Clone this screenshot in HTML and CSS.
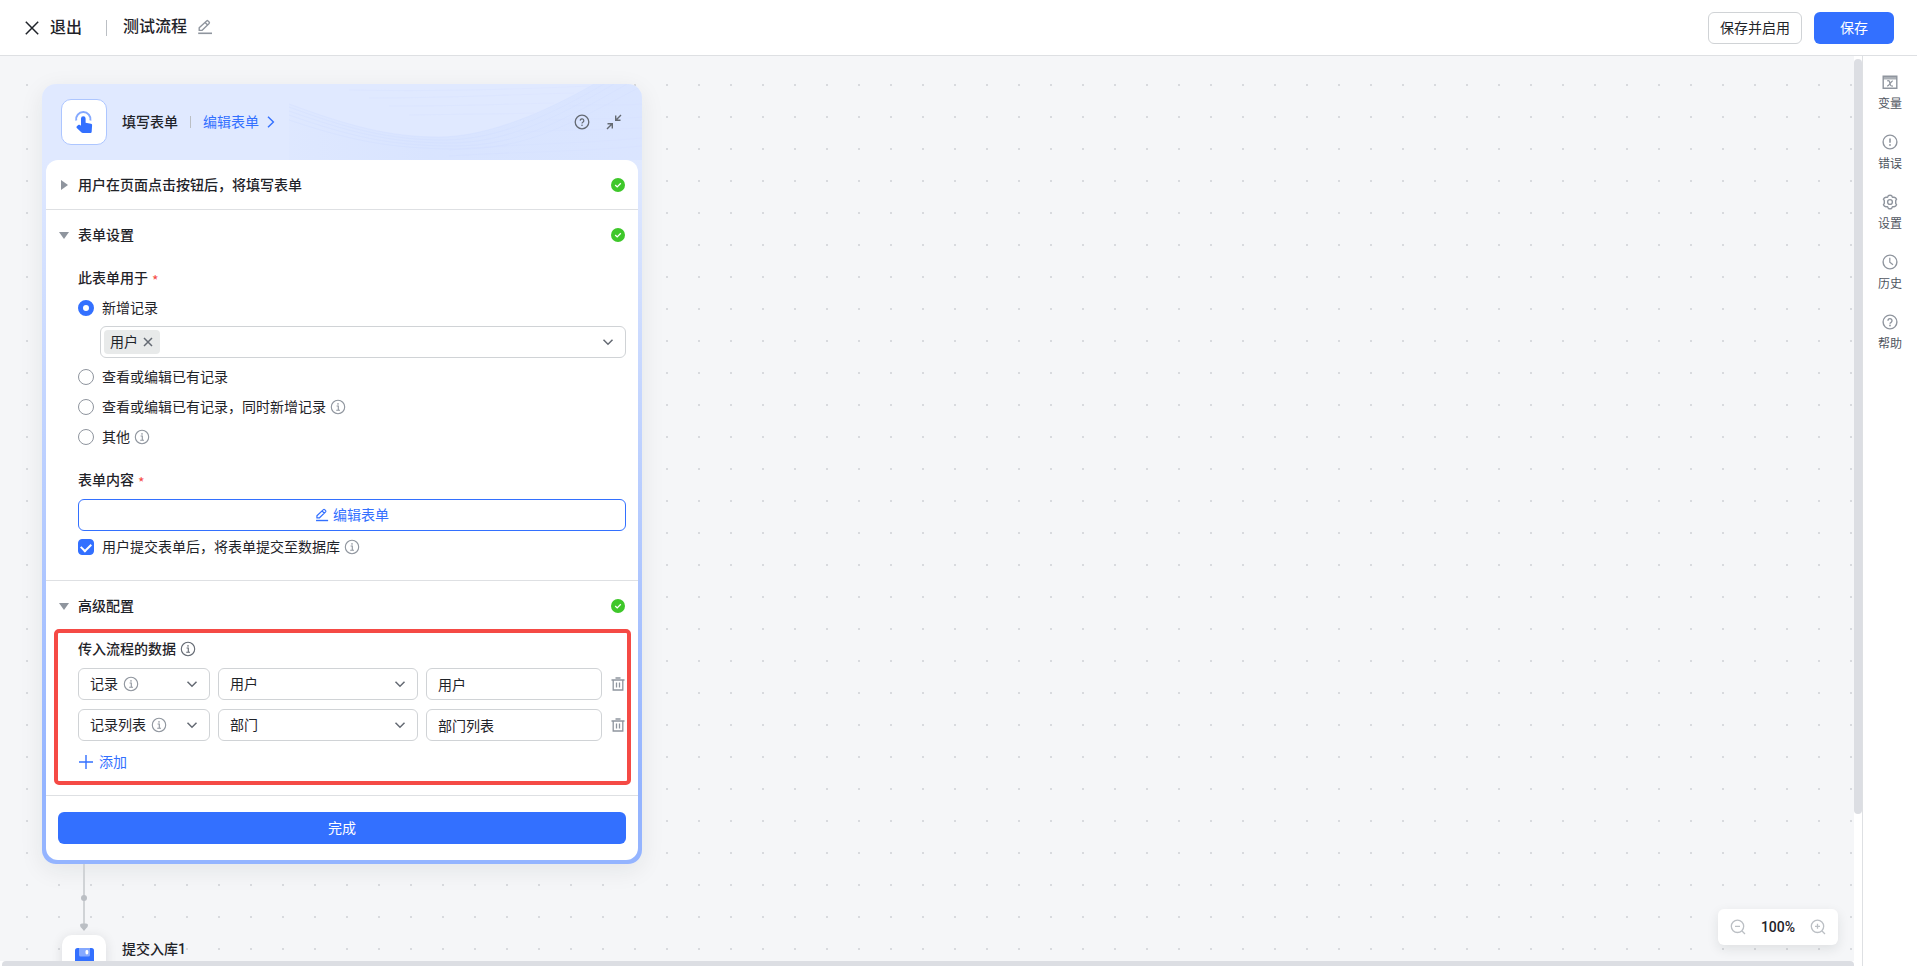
FILE: index.html
```html
<!DOCTYPE html>
<html lang="zh-CN">
<head>
<meta charset="utf-8">
<title>测试流程</title>
<link rel="stylesheet" href="styles.css">
</head>
<body>
<svg class="defs" aria-hidden="true">
  <symbol id="i-info" viewBox="0 0 16 16"><circle cx="8" cy="8" r="6.7" fill="none" stroke="currentColor" stroke-width="1.1"/><path d="M6.6 7h1.7v4M6.2 11.3h3.8" fill="none" stroke="currentColor" stroke-width="1.1"/><rect x="7.3" y="4.2" width="1.4" height="1.4" fill="currentColor"/></symbol>
  <symbol id="i-help" viewBox="0 0 16 16"><circle cx="8" cy="8" r="6.9" fill="none" stroke="currentColor" stroke-width="1.4"/><path d="M6 6.7a2 2 0 1 1 3.1 1.6c-.8.5-1.1.8-1.1 1.5" fill="none" stroke="currentColor" stroke-width="1.4"/><circle cx="8" cy="11.5" r=".9" fill="currentColor"/></symbol>
  <symbol id="i-pen" viewBox="0 0 16 16"><path d="M2.2 11.4v-2.6L9.6 1.9a1 1 0 0 1 1.4 0l1.1 1.1a1 1 0 0 1 0 1.4L4.9 11.4zM8.1 3.4l2.5 2.5" fill="none" stroke="currentColor" stroke-width="1.4" stroke-linejoin="round"/><path d="M1.2 14.3h13.8" stroke="currentColor" stroke-width="1.6"/></symbol>
  <symbol id="i-down" viewBox="0 0 12 12"><path d="M1.5 3.8 6 8.2l4.500-4.400" fill="none" stroke="currentColor" stroke-width="1.5"/></symbol>
  <symbol id="i-check" viewBox="0 0 14 14"><circle cx="7" cy="7" r="7" fill="#3ec72a"/><path d="m4.200 7 2 1.900 3.600-3.600" fill="none" stroke="#fff" stroke-width="1.300"/></symbol>
  <symbol id="i-trash" viewBox="0 0 14 14"><path d="M.5 3h13M4.500 1h5M2.200 3v10h9.600V3M5.500 5.500v5M8.500 5.500v5" fill="none" stroke="currentColor" stroke-width="1.300"/></symbol>
</svg>

<header class="topbar">
  <button class="exit" type="button"><svg viewBox="0 0 14 14" class="ic14"><path d="m.8.8 12.400 12.400M13.200.8.8 13.200" stroke="currentColor" stroke-width="1.500"/></svg>退出</button>
  <span class="topbar-divider"></span>
  <h1 class="flow-name">测试流程</h1>
  <button class="icon-btn" type="button" aria-label="编辑名称"><svg class="ic16"><use href="#i-pen"/></svg></button>
  <div class="topbar-actions">
    <button class="btn btn-plain" type="button">保存并启用</button>
    <button class="btn btn-primary btn-save" type="button">保存</button>
  </div>
</header>

<div class="workspace">
  <main class="canvas">
    <section class="node">
      <div class="node-head">
        <svg class="waves" viewBox="0 0 353 76" preserveAspectRatio="none" fill="none" aria-hidden="true">
          <defs><linearGradient id="wave-fill" x1="0" x2="1"><stop offset="0" stop-color="#d3e0ff" stop-opacity=".15"/><stop offset=".4" stop-color="#d3e0ff" stop-opacity=".55"/><stop offset="1" stop-color="#d3e0ff" stop-opacity=".45"/></linearGradient></defs>
          <path d="M0 20C60 42 100 53 150 53S260 26 305 0H353V76H0Z" fill="url(#wave-fill)"/>
          <g stroke="#cddbff" stroke-width=".5" opacity=".5">
            <path d="M0 20C60 42 100 53 150 53S260 26 305 0M0 23C60 45 100 56 155 56S265 29 315 0M0 27C60 48 100 59 160 59S270 32 325 0M0 31C60 52 100 62 165 62S275 36 338 0M0 36C60 56 100 65 170 65S280 40 353 2"/>
            <path d="M60 6C160 8 260 4 300 2M80 14C160 14 240 10 285 9M100 22C180 22 220 20 265 19M120 31C180 30 220 30 245 29M160 66C220 60 290 60 353 54M160 72C220 68 290 68 353 62M230 48C270 46 310 46 353 44M260 36C290 34 320 36 353 33M280 22C310 20 330 22 353 20" opacity=".7"/>
          </g>
        </svg>
        <span class="node-icon"><svg viewBox="0 0 24 24" class="ic24"><path d="M4.200 10.500a7.200 7.200 0 1 1 14.200 0" fill="none" stroke="#85a9ff" stroke-width="2"/><path d="M9 8.500a2.300 2.300 0 0 1 4.600 0v4.300l5.400.9c.8.200 1.200.8 1.100 1.500l-.4 6.200c0 .9-.7 1.600-1.600 1.600H11c-.8 0-1.500-.3-2-.9l-4.200-4.200c-.6-.6-.3-1.500.3-1.900l1.200-.9c.7-.5 1.700-.4 2.700.6z" fill="#3370ff"/></svg></span>
        <h2 class="node-title">填写表单</h2>
        <span class="head-divider"></span>
        <a class="head-link" href="#form">编辑表单<svg viewBox="0 0 8 12" class="chev"><path d="m1 .8 5.400 5.200L1 11.200" fill="none" stroke="currentColor" stroke-width="1.400"/></svg></a>
        <div class="head-tools">
          <button class="icon-btn dark" type="button" aria-label="帮助"><svg viewBox="0 0 16 16" class="ic16"><circle cx="8" cy="8" r="6.800" fill="none" stroke="currentColor" stroke-width="1.300"/><path d="M6.200 6.600a1.800 1.800 0 1 1 2.900 1.500c-.8.500-1.100.8-1.100 1.500" fill="none" stroke="currentColor" stroke-width="1.200"/><circle cx="8" cy="11.300" r=".8" fill="currentColor"/></svg></button>
          <button class="icon-btn dark" type="button" aria-label="收起"><svg viewBox="0 0 16 16" class="ic16"><path d="M15 1 10.300 5.700M9.700 1.500v4.800h4.800M1 15l4.700-4.700M1.500 9.700h4.800v4.800" fill="none" stroke="currentColor" stroke-width="1.400"/></svg></button>
        </div>
      </div>

      <div class="node-body">
        <section class="section">
          <div class="section-head"><button class="caret caret-right" type="button" aria-label="展开"></button><h3>用户在页面点击按钮后，将填写表单</h3><svg class="ic14"><use href="#i-check"/></svg></div>
        </section>

        <section class="section">
          <div class="section-head"><button class="caret caret-down" type="button" aria-label="收起"></button><h3>表单设置</h3><svg class="ic14"><use href="#i-check"/></svg></div>
          <div class="section-body">
            <fieldset class="field">
              <legend class="label">此表单用于<span class="req">*</span></legend>
              <label class="choice"><input type="radio" name="use" checked>新增记录</label>
              <div class="tag-select">
                <span class="tag">用户<button type="button" aria-label="移除用户"><svg viewBox="0 0 10 10" class="ic10"><path d="m1 1 8 8M9 1 1 9" stroke="currentColor" stroke-width="1.500"/></svg></button></span>
                <button class="icon-btn dark" type="button" aria-label="选择数据表"><svg class="ic12"><use href="#i-down"/></svg></button>
              </div>
              <label class="choice"><input type="radio" name="use">查看或编辑已有记录</label>
              <label class="choice"><input type="radio" name="use">查看或编辑已有记录，同时新增记录<svg class="ic16 info"><use href="#i-info"/></svg></label>
              <label class="choice"><input type="radio" name="use">其他<svg class="ic16 info"><use href="#i-info"/></svg></label>
            </fieldset>
            <div class="field" id="form">
              <div class="label">表单内容<span class="req">*</span></div>
              <button class="btn btn-outline" type="button"><svg class="ic14"><use href="#i-pen"/></svg>编辑表单</button>
              <label class="choice submit"><input type="checkbox" checked>用户提交表单后，将表单提交至数据库<svg class="ic16 info"><use href="#i-info"/></svg></label>
            </div>
          </div>
        </section>

        <section class="section">
          <div class="section-head"><button class="caret caret-down" type="button" aria-label="收起"></button><h3>高级配置</h3><svg class="ic14"><use href="#i-check"/></svg></div>
          <div class="section-body">
            <div class="label">传入流程的数据<svg class="ic16 info info-dark"><use href="#i-info"/></svg></div>
            <div class="data-rows">
              <div class="data-row">
                <div class="select"><select aria-label="类型"><option>记录</option></select><svg class="ic16 info info-short"><use href="#i-info"/></svg><svg class="ic12 arrow"><use href="#i-down"/></svg></div>
                <div class="select"><select aria-label="数据表"><option>用户</option></select><svg class="ic12 arrow"><use href="#i-down"/></svg></div>
                <input class="text" type="text" aria-label="名称" value="用户">
                <button class="icon-btn" type="button" aria-label="删除"><svg class="ic14"><use href="#i-trash"/></svg></button>
              </div>
              <div class="data-row">
                <div class="select"><select aria-label="类型"><option>记录列表</option></select><svg class="ic16 info info-long"><use href="#i-info"/></svg><svg class="ic12 arrow"><use href="#i-down"/></svg></div>
                <div class="select"><select aria-label="数据表"><option>部门</option></select><svg class="ic12 arrow"><use href="#i-down"/></svg></div>
                <input class="text" type="text" aria-label="名称" value="部门列表">
                <button class="icon-btn" type="button" aria-label="删除"><svg class="ic14"><use href="#i-trash"/></svg></button>
              </div>
            </div>
            <button class="add" type="button"><svg viewBox="0 0 14 14" class="ic14"><path d="M7 0v14M0 7h14" stroke="currentColor" stroke-width="1.400"/></svg>添加</button>
          </div>
          <div class="highlight"></div>
        </section>

        <footer class="node-foot"><button class="btn btn-primary" type="button">完成</button></footer>
      </div>
    </section>

    <svg class="connector" viewBox="0 0 10 68" aria-hidden="true"><path d="M5 0v62" stroke="#d0d3d6" stroke-width="2"/><circle cx="5" cy="34" r="3" fill="#bbbfc4"/><path d="M1 61q0-1.500 2-1.500h4q2 0 2 1.500 0 2-2 3.500l-2 2.500-2-2.500Q1 63 1 61z" fill="#bbbfc4"/></svg>

    <section class="next-node">
      <span class="next-icon"><svg viewBox="0 0 20 20" class="ic20"><rect x="1" y="1" width="19" height="19" rx="2.500" fill="#3370ff"/><path d="M5 1h11v7a1.500 1.500 0 0 1-1.500 1.500h-8A1.500 1.500 0 0 1 5 8z" fill="#85a9ff"/><rect x="11.500" y="3" width="2.800" height="4.500" rx="1.400" fill="#fff"/></svg></span>
      <h2 class="node-title">提交入库1</h2>
    </section>

    <div class="zoom">
      <button class="icon-btn" type="button" aria-label="缩小"><svg viewBox="0 0 16 16" class="ic16"><circle cx="7.500" cy="7.300" r="6.200" fill="none" stroke="currentColor" stroke-width="1.300"/><path d="m12 12 3 3M5 7.300h5" stroke="currentColor" stroke-width="1.300"/></svg></button>
      <span>100%</span>
      <button class="icon-btn" type="button" aria-label="放大"><svg viewBox="0 0 16 16" class="ic16"><circle cx="7.500" cy="7.300" r="6.200" fill="none" stroke="currentColor" stroke-width="1.300"/><path d="m12 12 3 3M5 7.300h5M7.500 4.800v5" stroke="currentColor" stroke-width="1.300"/></svg></button>
    </div>
  </main>
  <div class="vbar"><div class="vthumb"></div></div>
  <div class="hbar"><div class="hthumb"></div></div>

  <nav class="side">
    <button type="button"><svg viewBox="0 0 16 16" class="ic16"><path d="M1.200 2.200h13.600v12H1.200z" fill="none" stroke="currentColor" stroke-width="1.400"/><path d="M1 2h14v3.500H1z" fill="currentColor" opacity=".75"/><path d="M5.200 6.800c2.300-.6 2.300.6 2.800 2.700s.6 3 2.800 2.500M10.800 6.800C9 7 7.500 12 5.200 12" fill="none" stroke="currentColor" stroke-width="1.300"/></svg>变量</button>
    <button type="button"><svg viewBox="0 0 16 16" class="ic16"><circle cx="8" cy="8" r="6.900" fill="none" stroke="currentColor" stroke-width="1.400"/><path d="M8 4.500v4.300" stroke="currentColor" stroke-width="1.600"/><circle cx="8" cy="11" r=".9" fill="currentColor"/></svg>错误</button>
    <button type="button"><svg viewBox="0 0 16 16" class="ic16"><path d="M6.300 1.700q1.700-1 3.400 0l.7 1.500 1.700 0q1.700.2 2.500 2l-.9 1.500v2.600l.9 1.500q-.8 1.800-2.500 2l-1.700 0-.7 1.500q-1.700 1-3.400 0l-.7-1.500-1.700 0q-1.700-.2-2.500-2l.9-1.500V6.700l-.9-1.500q.8-1.800 2.500-2l1.700 0z" fill="none" stroke="currentColor" stroke-width="1.400" stroke-linejoin="round"/><circle cx="8" cy="8" r="2.400" fill="none" stroke="currentColor" stroke-width="1.400"/></svg>设置</button>
    <button type="button"><svg viewBox="0 0 16 16" class="ic16"><circle cx="8" cy="8" r="6.900" fill="none" stroke="currentColor" stroke-width="1.400"/><path d="M7.800 3.800v4.400l3.200 2.600" fill="none" stroke="currentColor" stroke-width="1.200"/></svg>历史</button>
    <button type="button"><svg class="ic16"><use href="#i-help"/></svg>帮助</button>
  </nav>
</div>
</body>
</html>
```

FILE: styles.css
```css
:root {
  --blue: #3370ff;
  --text: #1f2329;
  --muted: #8f959e;
  --line: #dee0e3;
  --border: #d0d3d6;
}
* { box-sizing: border-box; }
body {
  margin: 0;
  height: 100vh;
  display: flex;
  flex-direction: column;
  overflow: hidden;
  color: var(--text);
  font-family: Roboto, "Noto Sans CJK SC", sans-serif;
  font-size: 14px;
  line-height: 22px;
}
h1, h2, h3 { margin: 0; font-weight: 500; font-size: 14px; }
button, input, select { font: inherit; color: inherit; margin: 0; }
button { padding: 0; border: 0; background: none; cursor: pointer; }
svg { display: block; flex: none; }
.defs { position: absolute; width: 0; height: 0; }
.ic10 { width: 10px; height: 10px; }
.ic12 { width: 12px; height: 12px; }
.ic14 { width: 14px; height: 14px; }
.ic16 { width: 16px; height: 16px; }
.ic20 { width: 20px; height: 20px; }
.ic24 { width: 24px; height: 24px; }
.icon-btn { display: flex; color: var(--muted); }
.icon-btn.dark { color: #646a73; }
.info { color: var(--muted); margin-left: 4px; }
.info-dark { color: #646a73; }

.topbar {
  flex: none;
  height: 56px;
  display: flex;
  align-items: center;
  padding: 0 23px 0 25px;
  border-bottom: 1px solid var(--line);
  background: #fff;
}
.exit { display: flex; align-items: center; gap: 11px; font-size: 16px; font-weight: 500; }
.topbar-divider { width: 1px; height: 16px; margin: 0 16px 0 24px; background: #bbbfc4; }
.flow-name { font-size: 16px; margin-right: 10px; padding-bottom: 2px; }
.flow-name + .icon-btn { padding-bottom: 2px; }
.topbar-actions { display: flex; gap: 12px; margin-left: auto; }
.btn {
  display: flex;
  align-items: center;
  justify-content: center;
  height: 32px;
  border-radius: 6px;
}
.btn-plain { padding: 0 11px; border: 1px solid var(--border); }
.btn-primary { background: var(--blue); color: #fff; }
.btn-save { width: 80px; }
.btn-outline { width: 100%; gap: 4px; border: 1px solid var(--blue); color: var(--blue); }

.workspace {
  flex: 1;
  min-height: 0;
  display: grid;
  grid-template-columns: 1fr 8px 55px;
  grid-template-rows: 1fr 5px;
}
.canvas {
  position: relative;
  overflow: hidden;
  background-color: #f5f6f8;
  background-image: conic-gradient(from 270deg at 2px 2px, #d8dade 90deg, transparent 0);
  background-position: 26px 28px;
  background-size: 32px 32px;
}
.vbar { padding-top: 3px; background: #fff; }
.vthumb { height: 755px; max-height: 84%; border-radius: 4px; background: #dcdee3; }
.hbar { grid-column: 1 / 3; grid-row: 2; padding: 0 8px 0 2px; background: #fff; overflow: hidden; }
.hthumb { height: 8px; border-radius: 4px; background: #dcdee3; }

.node {
  position: absolute;
  left: 42px;
  top: 28px;
  width: 600px;
  padding: 0 4px 4px;
  border-radius: 14px;
  background: linear-gradient(#e0e9ff 76px, #94b4ff 90%);
  box-shadow: 0 6px 24px rgba(31, 35, 41, .08);
}
.node-head {
  position: relative;
  display: flex;
  align-items: center;
  height: 76px;
  padding: 0 16px 0 15px;
}
.waves { position: absolute; right: -4px; top: 0; width: 353px; height: 76px; border-top-right-radius: 14px; }
.node-icon {
  display: grid;
  place-items: center;
  width: 46px;
  height: 46px;
  border: 1px solid #adc6ff;
  border-radius: 10px;
  background: #fff;
}
.node-title { margin-left: 15px; }
.head-divider { width: 1px; height: 12px; margin: 0 12px; background: #bbbfc4; }
.head-link { display: flex; align-items: center; gap: 8px; color: var(--blue); text-decoration: none; }
.chev { width: 8px; height: 12px; }
.head-tools { position: relative; display: flex; gap: 16px; margin-left: auto; }

.node-body { border-radius: 12px; background: #fff; }
.section { position: relative; border-bottom: 1px solid var(--line); }
.section-head { display: flex; align-items: center; height: 49px; padding: 0 13px; }
.section-head h3 { flex: 1; margin-left: 9px; }
.caret { display: grid; place-items: center; width: 10px; height: 16px; }
.caret::before { content: ""; border: 5px solid transparent; }
.caret-right::before { border-left: 7px solid var(--muted); border-right: 0; }
.caret-down { padding-top: 2px; }
.caret-down::before { border-top: 7px solid var(--muted); border-bottom: 0; }
.section-body { padding: 8px 12px 22px 32px; }
.field { margin: 0 0 21px; padding: 0; border: 0; }
.field:last-child { margin: 0; }
.label { display: flex; align-items: center; width: 100%; padding: 0; margin-bottom: 8px; font-weight: 500; }
.req { margin-left: 4px; padding-top: 4px; color: #f54a45; font-weight: 400; line-height: 18px; font-family: "Noto Sans CJK SC", sans-serif; }
.choice { display: flex; align-items: center; margin-top: 8px; }
.choice input { width: 16px; height: 16px; margin-right: 8px; appearance: none; border: 1px solid var(--muted); background: #fff; }
.choice input[type="radio"] { border-radius: 50%; }
.choice input[type="radio"]:checked { border: 5px solid var(--blue); }
.choice input[type="checkbox"] { display: grid; place-items: center; border-radius: 4px; }
.choice input[type="checkbox"]:checked { border-color: var(--blue); background: var(--blue); }
.choice input[type="checkbox"]:checked::before {
  content: "";
  width: 8px;
  height: 5px;
  margin-bottom: 2px;
  border: solid #fff;
  border-width: 0 0 2px 2px;
  transform: rotate(-45deg);
}
.label + .choice { margin-top: 0; }
.submit { margin-top: 5px; }
.tag-select {
  display: flex;
  align-items: center;
  justify-content: space-between;
  height: 32px;
  margin: 7px 0 0 22px;
  padding: 0 11px 0 3px;
  border: 1px solid var(--border);
  border-radius: 6px;
}
.tag { display: flex; align-items: center; gap: 5px; height: 24px; padding: 0 7px 0 6px; border-radius: 4px; background: #e8eaea; }
.tag button { color: #646a73; }

.data-rows { display: grid; gap: 9px; }
.data-row { display: grid; grid-template-columns: 132fr 200fr 176fr 16px; column-gap: 8px; align-items: center; }
.data-row .icon-btn { justify-content: center; }
.select { position: relative; }
.select select { display: block; width: 100%; height: 32px; padding: 0 28px 0 11px; border: 1px solid var(--border); border-radius: 6px; background: #fff; appearance: none; }
.select .arrow { position: absolute; right: 12px; top: 10px; color: #646a73; pointer-events: none; }
.select .info { position: absolute; top: 8px; margin: 0; }
.info-short { left: 45px; }
.info-long { left: 73px; }
.text { width: 100%; min-width: 0; height: 32px; padding: 0 11px; border: 1px solid var(--border); border-radius: 6px; }
.add { display: flex; align-items: center; gap: 6px; margin-top: 10px; padding-left: 1px; color: var(--blue); }
.highlight { position: absolute; inset: 48px 7px 10px 8px; border: 4px solid #f54a45; border-radius: 5px; pointer-events: none; }
.node-foot { padding: 16px 12px; }
.node-foot .btn { width: 100%; }

.connector { position: absolute; left: 79px; top: 808px; width: 10px; height: 68px; }
.next-node { position: absolute; left: 62px; top: 879px; display: flex; align-items: flex-start; }
.next-icon { display: grid; place-items: center; width: 44px; height: 44px; border-radius: 10px; background: #fff; box-shadow: 0 2px 12px rgba(31, 35, 41, .12); }
.next-node .node-title { margin: 3px 0 0 16px; }
.zoom {
  position: absolute;
  right: 16px;
  bottom: 16px;
  display: flex;
  align-items: center;
  justify-content: space-between;
  width: 120px;
  height: 36px;
  padding: 0 12px;
  border-radius: 6px;
  background: #fff;
  box-shadow: 0 4px 12px rgba(31, 35, 41, .1);
  font-weight: 500;
}
.zoom .icon-btn { color: #bbbfc4; }

.side {
  grid-column: 3;
  grid-row: 1 / 3;
  display: flex;
  flex-direction: column;
  gap: 21px;
  padding-top: 18px;
  border-left: 1px solid var(--line);
  background: #fff;
}
.side button { display: flex; flex-direction: column; align-items: center; gap: 5px; color: #50565f; font-size: 12px; line-height: 18px; }
.side svg { color: var(--muted); }
```
